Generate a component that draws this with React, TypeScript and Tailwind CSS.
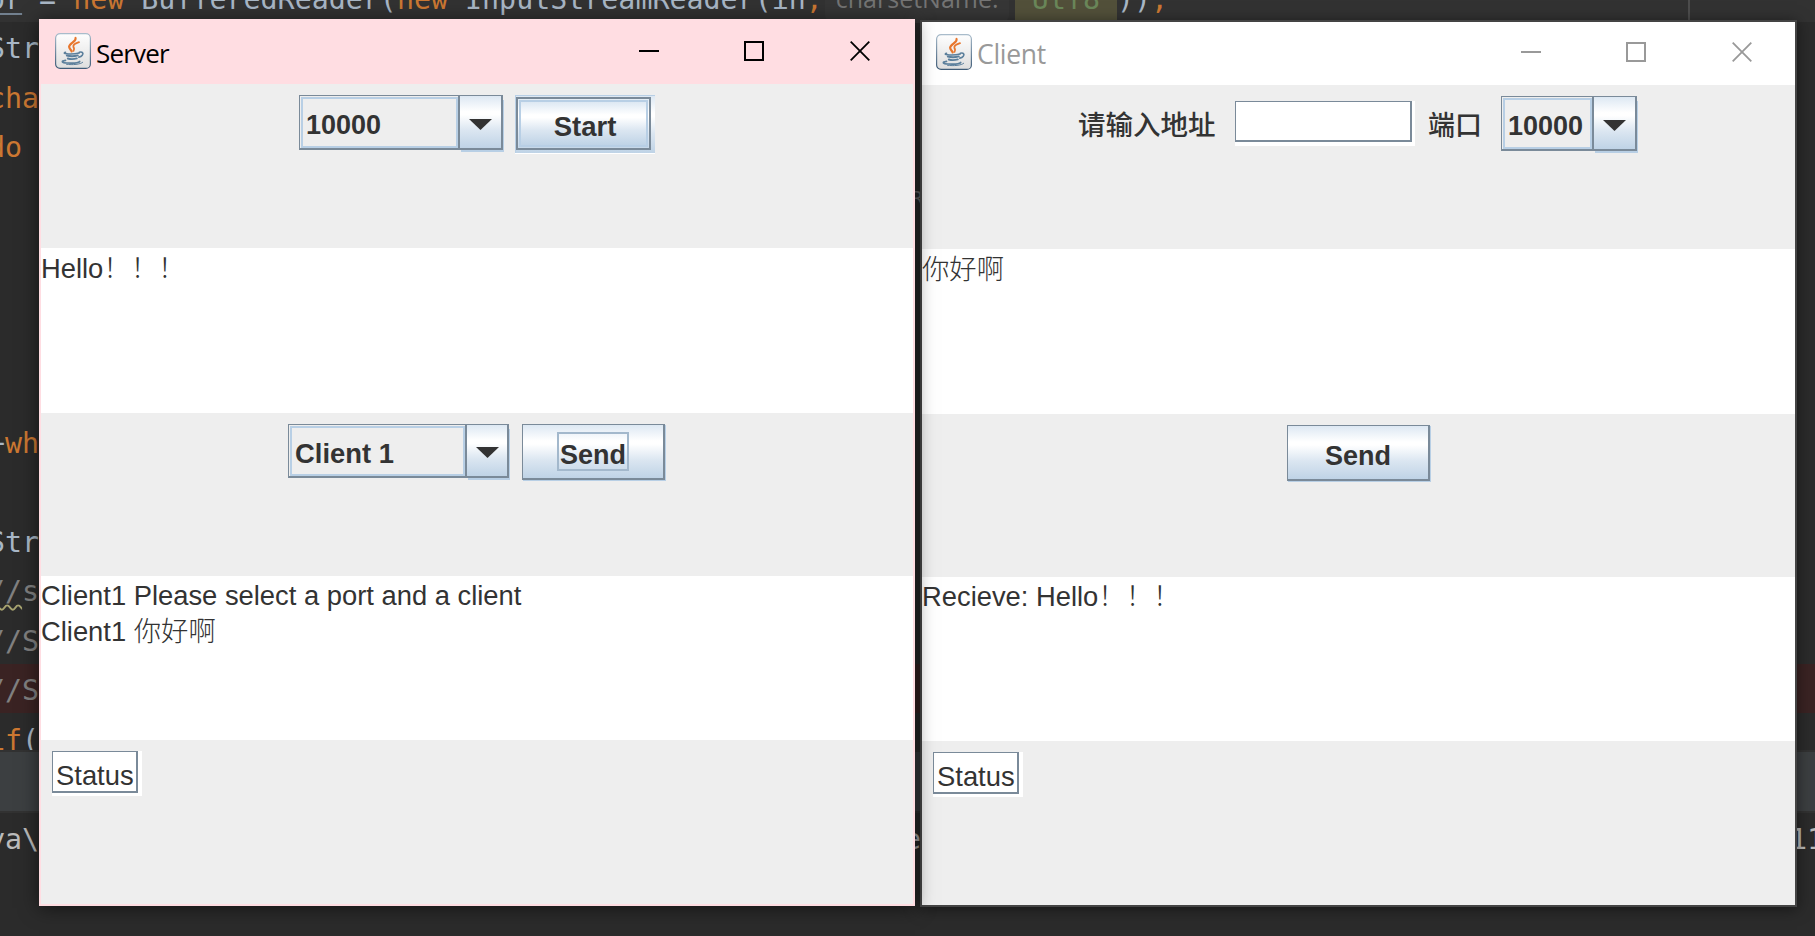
import type { ReactNode } from "react";

const kw = "text-[#cc7832]";
const dim = "text-[#808080]";

function CodeLine({ children, className = "" }: { children?: ReactNode; className?: string }) {
  return (
    <div className={`flex h-[49.4px] shrink-0 items-center whitespace-pre pt-[5px] pl-[5px] ${className}`}>
      <span className="-ml-[17px]">{children}</span>
    </div>
  );
}

function Editor() {
  return (
    <div className="flex h-[936px] flex-col overflow-hidden bg-[#2b2b2b] font-['DejaVu_Sans_Mono',monospace] text-[28.3px] leading-[44px] text-[#a9b7c6]">
      <div className="h-[750px] shrink-0 overflow-hidden">
        <div className="-mt-[27px] flex flex-col">
          <div className="flex h-[49px] shrink-0 items-center whitespace-pre bg-[#323232] pt-[4px]">
            <span className="-ml-[12px] flex items-center">
              <span className="underline decoration-[#72808f] decoration-2 underline-offset-[4px]">or</span>
              <span> = </span>
              <span className={kw}>new</span>
              <span> BufferedReader(</span>
              <span className={kw}>new</span>
              <span> InputStreamReader(in</span>
              <span className={kw}>,</span>
              <span className="mr-[6px] ml-[2px] flex h-[46px] w-[184px] items-center rounded-lg bg-[#363636] pl-[11px] font-['Open_Sans',sans-serif] text-[25px] text-[#747474]">
                <span className="-mt-[3px]">charsetName:</span>
              </span>
              <span className="bg-[#52503a] text-[#6a8759]">"Utf8"</span>
              <span>))</span>
              <span className={kw}>;</span>
            </span>
            <span className="ml-[520px] h-[49px] w-[2px] bg-[#4d4d4d]" />
          </div>
          <CodeLine>Str</CodeLine>
          <CodeLine className={kw}>cha</CodeLine>
          <CodeLine className={kw}>do</CodeLine>
          <div className="flex h-[49.4px] items-center pt-[6px] pl-[911px] text-[20px] text-[#6f6f6f]">R</div>
          <CodeLine />
          <CodeLine />
          <CodeLine />
          <CodeLine />
          <CodeLine>
            +<span className={kw}>wh</span>
          </CodeLine>
          <CodeLine />
          <CodeLine>Str</CodeLine>
          <CodeLine className={dim}>
            <span className="underline decoration-[#a8a470] decoration-wavy decoration-[1.5px] underline-offset-[3px]">//</span>s
          </CodeLine>
          <CodeLine className={dim}>//S</CodeLine>
          <CodeLine className={`bg-[#3a2323] ${dim}`}>//S</CodeLine>
          <CodeLine>
            <span className={kw}>if</span>(
          </CodeLine>
        </div>
      </div>
      <div className="h-[63px] shrink-0 border-y-2 border-[#323232] bg-[#3c3f41]" />
      <div className="flex h-[50px] shrink-0 items-center pt-[3px] text-[#bbbbbb]">
        <span className="-ml-[12px] w-[916px] shrink-0">ya\</span>
        <span className="w-[886px] shrink-0">e</span>
        <span>11</span>
      </div>
    </div>
  );
}

function JavaIcon() {
  return (
    <svg className="h-9 w-9 shrink-0" viewBox="0 0 36 36" fill="none">
      <defs>
        <linearGradient id="tile" x1="0" y1="0" x2="0" y2="1">
          <stop offset="0" stopColor="#fefefe" />
          <stop offset="1" stopColor="#dedede" />
        </linearGradient>
        <linearGradient id="rim" x1="0" y1="0" x2="0" y2="1">
          <stop offset="0" stopColor="#a9bccb" />
          <stop offset="1" stopColor="#3f5c78" />
        </linearGradient>
      </defs>
      <rect x="0.6" y="0.6" width="34.8" height="34.8" rx="4.5" fill="url(#tile)" stroke="url(#rim)" strokeWidth="1.2" />
      <g stroke="#e8772e" strokeLinecap="round">
        <path d="M20.5 5c1.2 3.6-6.4 5.2-6.4 8.8 0 1.9 2.2 3 2.6 4.7" strokeWidth="2.2" />
        <path d="M24 9.2c-3.8 1.2-6.2 2.8-5.6 4.7.5 1.4 1.6 2 .1 4" strokeWidth="1.8" />
      </g>
      <g stroke="#5b7f9c" strokeLinecap="round">
        <path d="M10.5 19.3c-2 .7-1.3 1.3 1.2 1.5 4 .4 8.5.2 12.5-.8" strokeWidth="1.6" />
        <path d="M11.8 22.5c3.5 1 7.8.8 11-.1" strokeWidth="1.9" />
        <path d="M12.8 25.5c2.7.9 6 .8 9-.1" strokeWidth="1.9" />
        <path d="M24.3 19.3c3-1 4.5 1 3 2.9-.8 1-2 1.6-3.5 1.9" strokeWidth="1.6" />
        <path d="M10.5 27.3c-5 .9-3.6 2.5 1.5 2.7 5.2.3 11.5 0 12.7-1.6" strokeWidth="1.7" />
        <path d="M11.5 31.3c6 .8 14 .2 16.2-2" strokeWidth="1" />
      </g>
    </svg>
  );
}

function Captions({ color }: { color: string }) {
  return (
    <div className={`flex items-center ${color}`}>
      <svg className="mr-[85px] h-5 w-5" viewBox="0 0 20 20" stroke="currentColor" strokeWidth="2">
        <path d="M0 10h20" />
      </svg>
      <svg className="mr-[86px] h-5 w-5" viewBox="0 0 20 20" stroke="currentColor" strokeWidth="2" fill="none">
        <path d="M1 1h18v18H1z" />
      </svg>
      <svg className="h-5 w-5" viewBox="0 0 20 20" stroke="currentColor" strokeWidth="1.8">
        <path d="M.7.7l18.6 18.6M19.3.7L.7 19.3" />
      </svg>
    </div>
  );
}

const metal = "bg-[linear-gradient(180deg,#dde8f3_0%,#ffffff_30%,#ffffff_36%,#dbe6f1_66%,#bfd3e6_100%)]";

function Combo({ label, size, arrow }: { label: string; size: string; arrow: string }) {
  return (
    <div className={`flex border border-r-2 border-b-2 border-[#7a8a99] ${size}`}>
      <div className="mt-px ml-px flex-1 border-2 border-[#b8cfe5] pl-[3px]">{label}</div>
      <div className={`flex items-center justify-center border-l-2 border-[#7a8a99] shadow-[2px_2px_0_#7a8a99,3px_4px_0_#b8cfe5] ${metal} ${arrow}`}>
        <svg className="mt-1 h-[11px] w-[23px]" viewBox="0 0 23 11">
          <path d="M0 0h23L11.5 11z" fill="#333" />
        </svg>
      </div>
    </div>
  );
}

function SendButton({ focused = false }: { focused?: boolean }) {
  return (
    <div className={`flex h-[56px] w-[143px] justify-center border border-r-2 border-b-2 border-[#7a8a99] pt-[7px] shadow-[1px_1px_0_#b8cfe5] ${metal}`}>
      <span className={`h-[39px] w-[72px] border-2 text-center leading-[43px] ${focused ? "border-[#a3b8cc]" : "border-transparent"}`}>Send</span>
    </div>
  );
}

function StatusField() {
  return (
    <div className="flex h-[45px] w-[90px] bg-white">
      <div className="h-[42px] w-[86px] border border-r-2 border-b-2 border-[#7a8a99] pl-[3px] text-[27.4px] leading-[47px]">Status</div>
    </div>
  );
}

function TextPane({ lines, height, pad }: { lines: string[]; height: string; pad: string }) {
  return (
    <div className={`bg-white text-[27.35px] leading-[36px] font-light ${height} ${pad}`}>
      {lines.map((line) => (
        <div key={line}>{line}</div>
      ))}
    </div>
  );
}

const uiFont = "font-['Liberation_Sans','Noto_Sans_CJK_SC',sans-serif] text-[27px] text-[#333333]";

export default function App() {
  return (
    <div className="relative h-[936px] w-[1815px] overflow-hidden">
      <Editor />

      <section className={`absolute top-[20px] left-[920px] h-[887px] w-[877px] border-2 border-[#444444] bg-[#eeeeee] shadow-[0_2px_14px_rgba(0,0,0,0.5)] ${uiFont}`}>
        <header className="flex h-[63px] items-center bg-white pr-[43px] pl-[14px]">
          <div className="-mt-[3px]">
            <JavaIcon />
          </div>
          <span className="flex-1 pt-[3px] pl-[5px] font-['Open_Sans',sans-serif] text-[26.5px] tracking-[-0.3px] text-[#999999]">Client</span>
          <div className="-mt-[3px]">
            <Captions color="text-[#999999]" />
          </div>
        </header>
        <div className="flex h-[164px] items-start pt-[11px] pl-[156px] font-bold whitespace-nowrap">
          <span className="w-[157px] pt-[10px] text-[27.5px] leading-[40px] font-medium">请输入地址</span>
          <div className="mt-[5px] h-[45px] w-[180px] bg-white">
            <div className="h-[41px] w-[177px] border border-r-2 border-b-2 border-[#7a8a99]" />
          </div>
          <span className="w-[86px] pt-[10px] pl-[13px] leading-[40px] font-medium">端口</span>
          <Combo label="10000" size="h-[55px] w-[136px] leading-[53px]" arrow="w-[43px]" />
        </div>
        <TextPane lines={["你好啊"]} height="h-[165px]" pad="pt-[3px]" />
        <div className="flex h-[163px] pt-[11px] pl-[365px] font-bold">
          <SendButton />
        </div>
        <TextPane lines={["Recieve: Hello！！！"]} height="h-[164px]" pad="pt-[2px]" />
        <div className="pt-[11px] pl-[11px]">
          <StatusField />
        </div>
      </section>

      <section className={`absolute top-[19px] left-[39px] h-[887px] w-[876px] border-2 border-t-0 border-[#ffdde2] bg-[#eeeeee] shadow-[0_2px_18px_rgba(0,0,0,0.55)] ${uiFont}`}>
        <header className="flex h-[65px] items-center bg-[#ffdde2] pr-[43px] pl-[14px]">
          <div className="-mt-px">
            <JavaIcon />
          </div>
          <span className="flex-1 pt-[3px] pl-[5px] font-['Open_Sans',sans-serif] text-[26px] tracking-[-0.8px] text-black">Server</span>
          <div className="-mt-[2px]">
            <Captions color="text-black" />
          </div>
        </header>
        <div className="flex h-[164px] items-start pt-[11px] pl-[258px] font-bold">
          <Combo label="10000" size="h-[55px] w-[204px] leading-[53px]" arrow="w-[43px]" />
          <div className={`ml-[12px] h-[58px] w-[140px] border-t border-l border-[#b8cfe5] shadow-[0_1px_0_#fff] ${metal}`}>
            <div className="mt-px h-[53px] w-[135px] border-2 border-[#7a8a99]">
              <div className={`m-px h-[47px] border-2 border-[#b8cfe5] pl-[3px] text-center text-[27.5px] leading-[50px] ${metal}`}>Start</div>
            </div>
          </div>
        </div>
        <TextPane lines={["Hello！！！"]} height="h-[165px]" pad="pt-[3px]" />
        <div className="flex h-[163px] items-start pt-[11px] pl-[247px] font-bold">
          <Combo label="Client 1" size="h-[54px] w-[221px] leading-[51px] text-[27.4px]" arrow="w-[42px]" />
          <div className="ml-[13px]">
            <SendButton focused />
          </div>
        </div>
        <TextPane lines={["Client1 Please select a port and a client", "Client1 你好啊"]} height="h-[164px]" pad="pt-[2px]" />
        <div className="pt-[11px] pl-[11px]">
          <StatusField />
        </div>
      </section>
    </div>
  );
}
